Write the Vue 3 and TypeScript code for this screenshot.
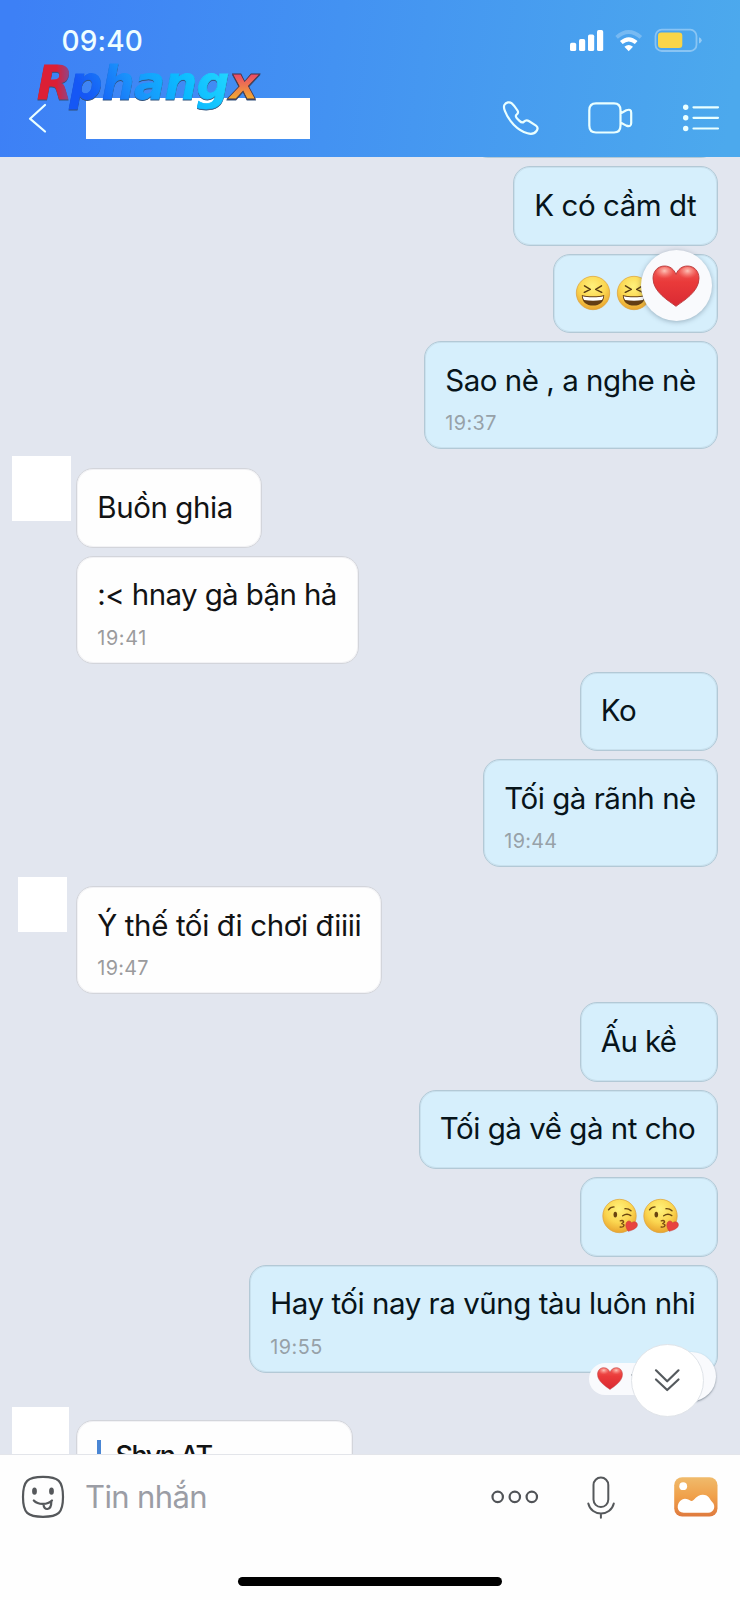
<script setup lang="ts">
type Emoji = 'laugh' | 'kiss'

interface Message {
  from: 'me' | 'them'
  width: number
  text?: string
  textWidth?: number
  emoji?: Emoji
  time?: string
  timeWidth?: number
  avatar?: 'large' | 'small' | 'tall'
  turn?: boolean
  reaction?: 'heart' | 'summary'
}

const messages: Message[] = [
  { from: 'me', width: 205, text: 'K có cầm dt', textWidth: 162 },
  { from: 'me', width: 165.5, emoji: 'laugh', reaction: 'heart' },
  { from: 'me', width: 294, text: 'Sao nè , a nghe nè', textWidth: 250.5, time: '19:37', timeWidth: 51.5 },
  { from: 'them', width: 186, text: 'Buồn ghia', textWidth: 135.5, avatar: 'large', turn: true },
  { from: 'them', width: 283, text: ':< hnay gà bận hả', textWidth: 239.5, time: '19:41', timeWidth: 49.5 },
  { from: 'me', width: 138.5, text: 'Ko', textWidth: 35.5 },
  { from: 'me', width: 235, text: 'Tối gà rãnh nè', textWidth: 191.5, time: '19:44', timeWidth: 53 },
  { from: 'them', width: 306, text: 'Ý thế tối đi chơi điiii', textWidth: 264, time: '19:47', timeWidth: 51.5, avatar: 'small', turn: true },
  { from: 'me', width: 138.5, text: 'Ấu kề', textWidth: 75.5 },
  { from: 'me', width: 299.5, text: 'Tối gà về gà nt cho', textWidth: 255.5 },
  { from: 'me', width: 138.5, emoji: 'kiss' },
  { from: 'me', width: 469, text: 'Hay tối nay ra vũng tàu luôn nhỉ', textWidth: 425, time: '19:55', timeWidth: 52.5, reaction: 'summary' },
]

// Spreads the letters of a line so that it fills the given width.
const vFit = {
  mounted(el: HTMLElement, binding: { value?: number }) {
    if (!binding.value) return
    const count = Array.from(el.textContent ?? '').length
    const natural = el.getBoundingClientRect().width
    el.style.letterSpacing = `${(binding.value - natural) / count}px`
  },
}
</script>

<template>
  <div class="screen">
    <svg class="defs" width="0" height="0" aria-hidden="true">
      <defs>
        <radialGradient id="face" cx="0.48" cy="0.3" r="0.72">
          <stop offset="0" stop-color="#fff27c" />
          <stop offset="0.55" stop-color="#fbd650" />
          <stop offset="1" stop-color="#e8a12c" />
        </radialGradient>
        <linearGradient id="heartFill" x1="0" y1="0" x2="0" y2="1">
          <stop offset="0" stop-color="#f0605a" />
          <stop offset="0.4" stop-color="#ea3a3a" />
          <stop offset="1" stop-color="#d92a33" />
        </linearGradient>
        <radialGradient id="heartShine" cx="0.5" cy="0.3" r="0.6">
          <stop offset="0" stop-color="#ffd0c4" stop-opacity="0.9" />
          <stop offset="1" stop-color="#ff8a80" stop-opacity="0" />
        </radialGradient>
        <symbol id="heart" viewBox="0 0 48 42">
          <path d="M24 41.3C17 36 1 27 1 13.300C1 6 6 1 12.500 1C18 1 22 4.200 24 9.500C26 4.200 30 1 35.500 1C42 1 47 6 47 13.300C47 27 31 36 24 41.300Z" fill="url(#heartFill)" stroke="#b83a3c" stroke-width="0.9" />
          <ellipse cx="12.500" cy="8.500" rx="8.500" ry="6.500" fill="url(#heartShine)" />
          <ellipse cx="35.500" cy="8.500" rx="8.500" ry="6.500" fill="url(#heartShine)" />
        </symbol>
        <symbol id="laugh" viewBox="0 0 36 36">
          <circle cx="18" cy="18" r="16.700" fill="url(#face)" stroke="#dda03a" stroke-width="0.7" />
          <path d="M9.500 10.800L15.300 14.300L9.300 17.300M26.500 10.800L20.700 14.300L26.700 17.300" fill="none" stroke="#5a3c12" stroke-width="1.500" stroke-linecap="round" stroke-linejoin="round" />
          <path d="M6.800 20C10.500 21.700 25.500 21.700 29.200 20C29.200 27 24.500 30.600 18 30.600S6.800 27 6.800 20Z" fill="#633d14" />
          <path d="M7.700 21.200C12 22.600 24 22.600 28.300 21.200C28 23.300 27.400 24.300 26.800 25C21 26 15 26 9.200 25C8.500 24 8 23 7.700 21.200Z" fill="#fff" />
        </symbol>
        <symbol id="kiss" viewBox="0 0 36 36">
          <circle cx="17.500" cy="18" r="16.700" fill="url(#face)" stroke="#dda03a" stroke-width="0.7" />
          <path d="M6.500 11.800C8 9.700 9.800 8.900 12 8.900M23 10.700C25.500 10.500 27.500 11.400 29 12.800M20.700 17.800C23.500 15.800 26.500 15.900 28.800 17.600" fill="none" stroke="#6a4712" stroke-width="1.400" stroke-linecap="round" />
          <ellipse cx="13.300" cy="16.600" rx="1.800" ry="2.900" fill="#69430f" />
          <path d="M18.300 22.800C21.500 21.800 23 24.200 19.800 25.600C23.200 26.200 22.500 29.600 18.200 29" fill="none" stroke="#7a4a12" stroke-width="1.400" stroke-linecap="round" stroke-linejoin="round" />
          <path d="M26.200 33.300C24.500 30.500 23 28 24.200 25C25.300 22.300 28.600 22.200 29.600 25C31.800 22.700 35.500 23.800 35.400 27C35.200 30.200 30.500 32.300 26.200 33.300Z" fill="#e8433f" stroke="#c43a35" stroke-width="0.5" />
        </symbol>
      </defs>
    </svg>

    <header class="header">
      <div class="status">
        <span class="clock" v-fit="81.5">09:40</span>
        <svg class="signals" width="134" height="26" viewBox="569 27 134 26">
          <g fill="#fff">
            <rect x="570" y="42.800" width="6.200" height="8.300" rx="1.700" />
            <rect x="579" y="39" width="6.200" height="12.100" rx="1.700" />
            <rect x="588" y="34.500" width="6.200" height="16.600" rx="1.700" />
            <rect x="597" y="30" width="6.200" height="21.100" rx="1.700" />
            <path d="M628.700 51.200L624.400 46.800Q628.700 43.300 633 46.800Z" />
          </g>
          <path d="M621.300 42.600Q628.700 36 636.200 42.600" fill="none" stroke="#fff" stroke-width="4" />
          <path d="M616.600 37.400Q628.700 26.800 640.900 37.400" fill="none" stroke="#fff" stroke-opacity="0.25" stroke-width="3.800" />
          <rect x="655.500" y="29.700" width="41" height="21.300" rx="6.300" fill="none" stroke="#fff" stroke-opacity="0.35" stroke-width="1.800" />
          <rect x="658" y="32.500" width="24.300" height="15.600" rx="3.300" fill="#f9d548" />
          <path d="M699 37.200Q701.700 38 701.700 40.300T699 43.500Z" fill="#fff" fill-opacity="0.4" />
        </svg>
      </div>
      <nav class="nav">
        <svg class="back" width="20" height="32" viewBox="27 102 20 32" fill="none">
          <path d="M45 105L30 118.700L45 131.500" stroke="#eaffff" stroke-width="2.200" stroke-linecap="round" stroke-linejoin="round" />
        </svg>
        <div class="name-cover"></div>
        <svg class="actions" width="222" height="40" viewBox="500 98 222 40" fill="none" stroke="#eaffff" stroke-width="2.200" stroke-linecap="round" stroke-linejoin="round">
          <path d="M504.500 104.800C506 102.300 509.500 101.500 511.800 103.300C514.200 105.300 516 108.100 517.500 110.500C518.400 112 518.100 113.500 516.600 114.600C515.300 115.500 515.700 117.100 517.300 118.700L519.500 120.900C521 122.400 522.600 123 524 121.600C525.300 120.300 527.300 120 529.200 121.200L536 125.600C538.200 127.200 538 128.900 536.500 131C534.500 133.800 531 134.300 527.500 133.300C517 130.200 508.800 120.800 505 111.200C504 108.800 503.500 106.500 504.500 104.800Z" />
          <path d="M596 103.300H614Q620.500 103.300 620.500 110.300V125.500Q620.500 132.500 614 132.500H596Q589.300 132.500 589.300 125.500V110.300Q589.300 103.300 596 103.300ZM620.500 113.500L626.300 110.300Q631.200 108.500 631.200 112.700V123Q631.200 127.500 626.300 125.600L620.500 122.500" />
          <path d="M693.500 107.300H718M693.500 117.800H718M693.500 128.500H718" />
          <g fill="#eaffff" stroke="none">
            <circle cx="685.700" cy="107.300" r="2.700" />
            <circle cx="685.700" cy="117.800" r="2.700" />
            <circle cx="685.700" cy="128.500" r="2.700" />
          </g>
        </svg>
      </nav>
      <svg class="logo" width="260" height="76" viewBox="20 48 260 76">
        <defs>
          <linearGradient id="logoR" x1="0" x2="1">
            <stop offset="0.55" stop-color="#dc1f35" />
            <stop offset="1" stop-color="#7a4f9e" />
          </linearGradient>
          <linearGradient id="logoMid" x1="0" x2="1" y1="0.2">
            <stop offset="0" stop-color="#1557f5" />
            <stop offset="0.32" stop-color="#1a93fb" />
            <stop offset="0.6" stop-color="#0bb9ff" />
            <stop offset="1" stop-color="#25dcff" />
          </linearGradient>
          <linearGradient id="logoX" x1="0" x2="0" y1="0.35" y2="0.85">
            <stop offset="0" stop-color="#ea4a68" />
            <stop offset="1" stop-color="#f2b52c" />
          </linearGradient>
        </defs>
        <g class="logo-text">
          <text x="37" y="98.500" textLength="35" fill="url(#logoR)" stroke="url(#logoR)">R</text>
          <text x="69.500" y="98.500" textLength="160" fill="url(#logoMid)" stroke="url(#logoMid)">phang</text>
          <text x="229" y="98.500" textLength="28" fill="url(#logoX)" stroke="#45354a">x</text>
        </g>
      </svg>
    </header>

    <main class="chat">
      <div class="bubble me cut"></div>
      <div
        v-for="(m, i) in messages"
        :key="i"
        class="row"
        :class="[m.from, { turn: m.turn }]"
      >
        <div v-if="m.avatar" class="avatar" :class="m.avatar"></div>
        <div class="bubble" :class="[m.from, { timed: m.time }]" :style="{ width: m.width + 'px' }">
          <div v-if="m.emoji" class="emojis">
            <svg v-for="n in 2" :key="n" width="36" height="36"><use :href="'#' + m.emoji" /></svg>
          </div>
          <div v-else class="line"><span v-fit="m.textWidth">{{ m.text }}</span></div>
          <div v-if="m.time" class="time"><span v-fit="m.timeWidth">{{ m.time }}</span></div>
          <div v-if="m.reaction === 'heart'" class="big-reaction">
            <svg width="48" height="42"><use href="#heart" /></svg>
          </div>
          <template v-if="m.reaction === 'summary'">
            <div class="small-reaction">
              <svg width="26" height="23"><use href="#heart" /></svg>
              <i class="tick"></i>
            </div>
            <div class="add-reaction"></div>
          </template>
        </div>
      </div>
      <div class="row them last">
        <div class="avatar tall"></div>
        <div class="bubble them quote">
          <div class="quote-bar"></div>
          <div class="quote-name"><span v-fit="96">Shyn AT</span></div>
        </div>
      </div>
      <button class="to-bottom" aria-label="Scroll to latest">
        <svg width="28" height="26" viewBox="653 1368 28 26" fill="none" stroke="#555a5e" stroke-width="2.200" stroke-linecap="round" stroke-linejoin="round">
          <path d="M656 1371.300L667.200 1382.300L678.500 1371.300M656 1380.500L667.200 1391L678.500 1380.500" />
        </svg>
      </button>
    </main>

    <footer class="composer">
      <div class="tools">
        <svg class="sticker" width="44" height="44" viewBox="21 1474.500 44 44" fill="none" stroke="#55585b" stroke-width="2.200" stroke-linecap="round" stroke-linejoin="round">
          <path d="M43 1476.300C58.500 1476.300 63 1480.500 63 1496.500S58.500 1516.300 43 1516.300S23 1512.500 23 1496.500S27.500 1476.300 43 1476.300Z" />
          <path d="M33.800 1500C38 1504.600 47.500 1504.600 52 1500M43.500 1503.500C43.500 1510.500 51.500 1510.500 51.300 1501.300" />
          <ellipse cx="34.500" cy="1490.700" rx="1.300" ry="2.500" fill="#55585b" />
          <ellipse cx="51.500" cy="1490.700" rx="1.300" ry="2.500" fill="#55585b" />
        </svg>
        <div class="placeholder"><span v-fit="122">Tin nhắn</span></div>
        <svg class="more" width="50" height="16" viewBox="490 1488.500 50 16" fill="none" stroke="#505357" stroke-width="2.200">
          <circle cx="497.700" cy="1496.400" r="5.200" />
          <circle cx="514.800" cy="1496.400" r="5.200" />
          <circle cx="531.800" cy="1496.400" r="5.200" />
        </svg>
        <svg class="mic" width="30" height="46" viewBox="585.500 1475 30 46" fill="none" stroke="#55585b" stroke-width="2" stroke-linecap="round">
          <rect x="593" y="1477.600" width="14.800" height="29.400" rx="7.400" />
          <path d="M587.800 1503.400C591 1517 610 1517 613.300 1503.400M600.400 1513.800V1517.800" />
        </svg>
        <svg class="photo" width="44" height="40" viewBox="673.300 1476.500 44 40">
          <defs>
            <linearGradient id="photoFill" x1="0" x2="0" y1="0" y2="1">
              <stop offset="0" stop-color="#f0bb6c" />
              <stop offset="0.5" stop-color="#f0a04a" />
              <stop offset="1" stop-color="#df7a3e" />
            </linearGradient>
          </defs>
          <rect x="673.500" y="1476.700" width="43.300" height="39.300" rx="8" fill="url(#photoFill)" />
          <circle cx="682.500" cy="1485.700" r="3.900" fill="#fff" />
          <path d="M683 1512.200C675.500 1512.200 675 1502.500 681.500 1499C685 1497 688 1499.500 690.500 1500.500C693.500 1501 695.500 1494.300 702 1494.300C708.500 1494.300 709 1499.500 711.500 1501.500C715.500 1505 713.500 1512.200 707.500 1512.200Z" fill="#fff" />
        </svg>
      </div>
      <div class="home-indicator"></div>
    </footer>
  </div>
</template>

<style>
body {
  margin: 0;
}
</style>

<style scoped>
.screen {
  width: 740px;
  height: 1600px;
  overflow: hidden;
  display: flex;
  flex-direction: column;
  background: #fff;
  font-family: Inter, 'Noto Sans', 'Liberation Sans', sans-serif;
}
svg {
  display: block;
  flex: none;
}
.defs {
  position: absolute;
}
span {
  display: inline-block;
  white-space: pre;
}

.header {
  position: relative;
  height: 157px;
  flex: none;
  background: linear-gradient(98deg, #3d80f6 2%, #4392f2 45%, #4ca9ed 98%);
}
.status {
  height: 80px;
  box-sizing: border-box;
  padding: 0 37px 0 61.500px;
  display: flex;
  justify-content: space-between;
  align-items: center;
}
.clock {
  margin-top: 1px;
  font-size: 28px;
  font-weight: 550;
  line-height: 34px;
  color: #eefeff;
}
.nav {
  height: 76px;
  display: flex;
  align-items: center;
}
.back {
  margin-left: 27px;
}
.name-cover {
  width: 224px;
  height: 41px;
  margin: 0 190px 0 39px;
  background: #fff;
}
.logo {
  position: absolute;
  left: 20px;
  top: 48px;
}
.logo-text {
  font-family: 'DejaVu Sans', sans-serif;
  font-weight: 700;
  font-style: italic;
  font-size: 46px;
  stroke-width: 0.8px;
  filter: drop-shadow(0.5px 1.5px 0.3px #31527c);
}

.chat {
  position: relative;
  height: 1297px;
  box-sizing: border-box;
  flex: none;
  overflow: hidden;
  background: #e2e6ef;
  display: flex;
  flex-direction: column;
}
.row {
  position: relative;
  flex: none;
  display: flex;
  margin-top: 8px;
  padding: 0 22px 0 76px;
}
.row.me {
  justify-content: flex-end;
}
.row.turn {
  margin-top: 19.2px;
}
.row.last {
  margin-top: 47px;
}
.bubble {
  position: relative;
  flex: none;
  box-sizing: border-box;
  height: 79.6px;
  padding: 19.500px 0 0 20.300px;
  border: 1px solid #d3d5db;
  border-radius: 17px;
  background: #fefefe;
  box-shadow: inset 0 0 0 1px #f2f2f5;
  color: #121314;
}
.bubble.me {
  border-color: #b3c9d6;
  background: #d6effc;
  box-shadow: inset 0 0 0 1px #c9e1ee;
}
.bubble.me .line {
  color: #07141a;
}
.bubble.timed {
  height: 107.8px;
}
.bubble.cut {
  align-self: flex-end;
  width: 247px;
  margin: -78.400px 22px 0 0;
}
.line {
  height: 36px;
  line-height: 36px;
  font-size: 29.5px;
}
.time {
  margin-top: 13.300px;
  height: 24px;
  line-height: 24px;
  font-size: 19.800px;
  color: #97a1a8;
}
.bubble.them .time {
  color: #9b9b9d;
}
.emojis {
  display: flex;
  gap: 5px;
  padding: 0.500px 0 0 1.700px;
}
.avatar {
  position: absolute;
  background: #fff;
}
.avatar.large {
  left: 12px;
  top: -12.500px;
  width: 58.500px;
  height: 65px;
}
.avatar.small {
  left: 18px;
  top: -9px;
  width: 49px;
  height: 54.500px;
}
.avatar.tall {
  left: 12px;
  top: -13px;
  width: 57px;
  height: 65px;
}
.big-reaction {
  position: absolute;
  right: 5.500px;
  top: -5px;
  width: 71px;
  height: 71px;
  border-radius: 50%;
  background: #f9fafd;
  box-shadow: 0 1px 5px rgba(60, 80, 100, 0.4);
  display: flex;
  align-items: center;
  justify-content: center;
}
.big-reaction svg {
  margin-top: 2px;
}
.small-reaction {
  position: absolute;
  left: 339px;
  top: 97px;
  width: 70px;
  height: 32px;
  border-radius: 16px;
  background: #f9fafd;
  display: flex;
  align-items: center;
}
.small-reaction svg {
  margin: -1px 0 0 8px;
}
.tick {
  width: 3px;
  height: 2px;
  margin: 0 0 8px 8px;
  background: #9aa2a8;
}
.add-reaction {
  position: absolute;
  right: 1.500px;
  top: 86px;
  width: 49px;
  height: 49px;
  border-radius: 50%;
  background: #f9fafd;
  box-shadow: 0 1px 2px rgba(50, 65, 80, 0.5);
}
.bubble.quote {
  width: 277px;
  height: 110px;
  display: flex;
}
.quote-bar {
  width: 4px;
  height: 70px;
  margin-left: -0.800px;
  background: #4a86d4;
}
.quote-name {
  margin: -1px 0 0 15px;
  height: 34px;
  line-height: 34px;
  font-size: 27px;
  font-weight: 500;
}
.to-bottom {
  position: absolute;
  left: 630.500px;
  top: 1186.500px;
  width: 73px;
  height: 73px;
  padding: 0;
  border: 1px solid #e0e4e9;
  border-radius: 50%;
  background: #fff;
  display: flex;
  align-items: center;
  justify-content: center;
}

.composer {
  flex: 1;
  box-sizing: border-box;
  border-top: 1px solid #e3e5ea;
  background: #fefefe;
}
.tools {
  height: 83px;
  display: flex;
  align-items: center;
  padding-left: 21px;
}
.placeholder {
  margin-left: 20px;
  width: 405px;
  height: 38px;
  line-height: 38px;
  font-size: 31px;
  color: #9b9da5;
}
.mic {
  margin: 2px 0 0 45.500px;
}
.photo {
  margin-left: 58.300px;
}
.home-indicator {
  width: 264px;
  height: 9px;
  margin: 38.500px auto 0;
  border-radius: 5px;
  background: #000;
}
</style>
